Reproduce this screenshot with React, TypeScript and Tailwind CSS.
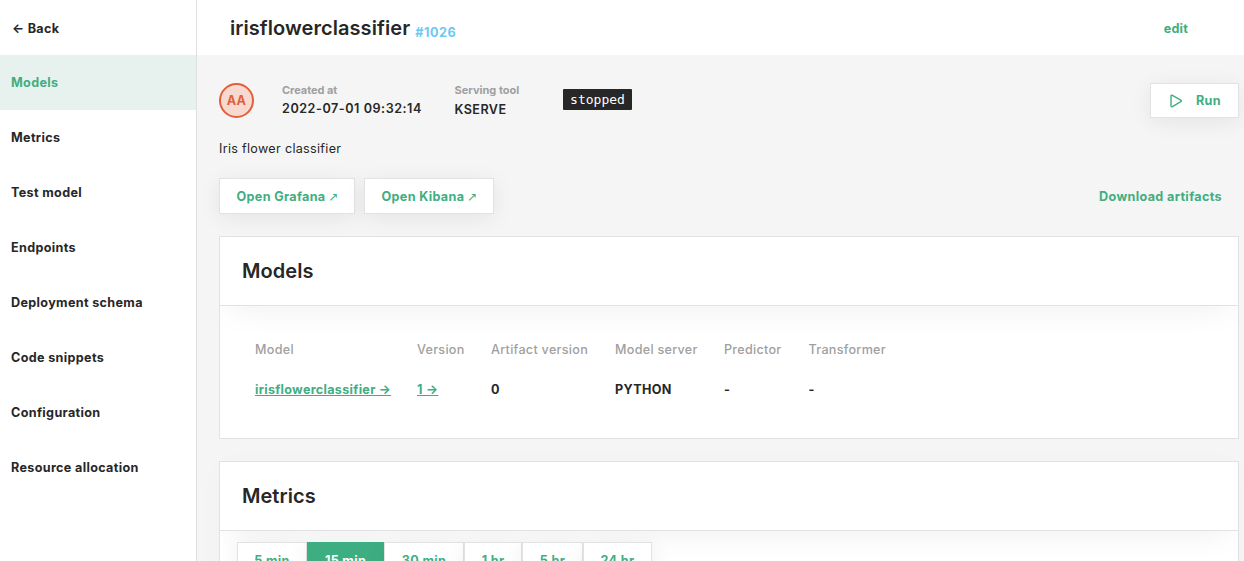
import React from 'react';

const nav = [
  'Models',
  'Metrics',
  'Test model',
  'Endpoints',
  'Deployment schema',
  'Code snippets',
  'Configuration',
  'Resource allocation',
];

const columns = [
  { head: 'Model', value: 'irisflowerclassifier →', link: true, width: 'w-[162px]' },
  { head: 'Version', value: '1 →', link: true, width: 'w-[74px]' },
  { head: 'Artifact version', value: '0', link: false, width: 'w-[124px]' },
  { head: 'Model server', value: 'PYTHON', link: false, width: 'w-[109px]' },
  { head: 'Predictor', value: '-', link: false, width: 'w-[84.5px]' },
  { head: 'Transformer', value: '-', link: false, width: 'w-[120px]' },
];

const ranges = [
  { label: '5 min', width: 'w-[70px]', active: false },
  { label: '15 min', width: 'w-[77px]', active: true },
  { label: '30 min', width: 'w-[80px]', active: false },
  { label: '1 hr', width: 'w-[58px]', active: false },
  { label: '5 hr', width: 'w-[61px]', active: false },
  { label: '24 hr', width: 'w-[69px]', active: false },
];

const buttonClass =
  'flex items-center border border-[#e2e2e2] bg-white font-bold tracking-[0.34px] text-[#41ae81] shadow-[0_4px_22px_rgba(0,0,0,0.07)]';

function CardHeader({ title }: { title: string }) {
  return (
    <div className="h-[69px] shrink-0 border-b border-[#e2e2e2] bg-white pl-[22px] shadow-[0_10px_34px_-10px_rgba(0,0,0,0.08)]">
      <h2 className="text-[20px] font-semibold leading-[68px] tracking-[0.05px]">{title}</h2>
    </div>
  );
}

function ExternalArrow() {
  return <span className="ml-[3px] font-['DejaVu_Sans',sans-serif] text-[12px] font-normal tracking-normal">↗</span>;
}

export default function App() {
  return (
    <div className="flex h-[561px] w-[1244px] overflow-hidden bg-[#f5f5f5] font-['Inter',sans-serif] text-[12.6px] leading-[16px] text-[#272727]">
      <aside className="w-[197px] shrink-0 border-r border-[#e0e0e0] bg-white font-bold tracking-[0.34px]">
        <div className="flex h-[55px] items-center pl-[12px] pt-[2px]">← Back</div>
        <nav>
          {nav.map((item, i) => (
            <div
              key={item}
              className={
                i === 0
                  ? 'flex h-[55px] items-center bg-[#e7f1ed] pl-[11px] pt-px text-[#41ae81]'
                  : 'flex h-[55px] items-center pl-[11px] pt-px'
              }
            >
              {item}
            </div>
          ))}
        </nav>
      </aside>

      <main className="flex min-w-0 grow flex-col">
        <header className="flex h-[55px] shrink-0 items-center justify-between bg-white pl-[33px] pr-[56px]">
          <div className="flex items-center">
            <h1 className="text-[20px] font-semibold leading-[24px] tracking-[0.07px]">irisflowerclassifier</h1>
            <span className="ml-[5px] mt-[11px] font-bold tracking-[0.6px] text-[#6cc9f3]">#1026</span>
          </div>
          <span className="pt-[2px] font-bold tracking-[0.2px] text-[#41ae81]">edit</span>
        </header>

        <div className="flex flex-col pl-[22px] pr-[5px] pt-[28px]">
          <div className="flex h-[35px] items-start">
            <div className="flex size-[35px] items-center justify-center rounded-full border-2 border-[#e0603c] bg-[#f7d9d0] font-bold tracking-[0.2px] text-[#e0603c]">
              AA
            </div>
            <div className="ml-[28px] w-[172px]">
              <div className="text-[11px] font-bold leading-[14px] tracking-[-0.05px] text-[#a0a0a0]">Created at</div>
              <div className="mt-[4px] font-semibold tracking-[0.54px]">2022-07-01 09:32:14</div>
            </div>
            <div className="w-[109px] pl-[0.5px]">
              <div className="text-[11px] font-bold leading-[14px] text-[#a0a0a0]">Serving tool</div>
              <div className="mt-[5px] font-semibold tracking-[0.45px]">KSERVE</div>
            </div>
            <div className="mt-[6px] flex h-[21px] w-[69px] items-center justify-center rounded-[1px] bg-[#272727] font-['DejaVu_Sans_Mono',monospace] text-[13px] text-white">
              stopped
            </div>
            <div className={buttonClass + ' ml-auto h-[35px] w-[89px] gap-[13px] pl-[18px]'}>
              <svg className="size-[14px]" viewBox="0 0 14 14" fill="none" stroke="#41ae81" strokeWidth="1.4" strokeLinejoin="round">
                <path d="M2 2.1c0-.9.7-1.2 1.4-.8l8.4 4.9c.7.4.7 1.1 0 1.5l-8.4 4.9c-.7.4-1.4 0-1.4-.8z" />
              </svg>
              <span>Run</span>
            </div>
          </div>

          <p className="mt-[23px] leading-[16px] tracking-[0.3px]">Iris flower classifier</p>

          <div className="mt-[21px] flex h-[36px] items-center">
            <div className={buttonClass + ' h-[36px] w-[136px] pl-[16.5px] pt-[2px]'}>
              Open Grafana<ExternalArrow />
            </div>
            <div className={buttonClass + ' ml-[9px] h-[36px] w-[130px] pl-[16.5px] pt-[2px]'}>
              Open Kibana<ExternalArrow />
            </div>
            <span className="ml-auto mr-[17px] pt-[2px] font-bold tracking-[0.36px] text-[#41ae81]">Download artifacts</span>
          </div>

          <section className="mt-[22px] flex h-[203px] flex-col overflow-hidden border border-[#e2e2e2] bg-white">
            <CardHeader title="Models" />
            <div className="flex pl-[35px] pt-[36px]">
              {columns.map((c) => (
                <div key={c.head} className={c.width + ' shrink-0 whitespace-nowrap'}>
                  <div className="font-medium tracking-[0.28px] text-[#a0a0a0]">{c.head}</div>
                  <div
                    className={
                      c.link
                        ? 'mt-[24px] font-bold tracking-[0.29px] text-[#41ae81] underline'
                        : 'mt-[24px] font-bold tracking-[0.34px]'
                    }
                  >
                    {c.value}
                  </div>
                </div>
              ))}
            </div>
          </section>

          <section className="mt-[22px] h-[200px] overflow-hidden border border-[#e2e2e2] bg-white shadow-[0_4px_30px_rgba(0,0,0,0.02)]">
            <CardHeader title="Metrics" />
            <div className="flex pl-[17px] pt-[11px] font-bold tracking-[0.34px]">
              {ranges.map((r) => (
                <div
                  key={r.label}
                  className={
                    r.width +
                    ' flex h-[36px] shrink-0 items-center justify-center border pt-[2px] shadow-[0_4px_22px_rgba(0,0,0,0.07)] ' +
                    (r.active
                      ? 'border-[#3dae82] bg-[#3dae82] text-white'
                      : 'border-[#e2e2e2] bg-white text-[#41ae81]')
                  }
                >
                  {r.label}
                </div>
              ))}
            </div>
          </section>
        </div>
      </main>
    </div>
  );
}
